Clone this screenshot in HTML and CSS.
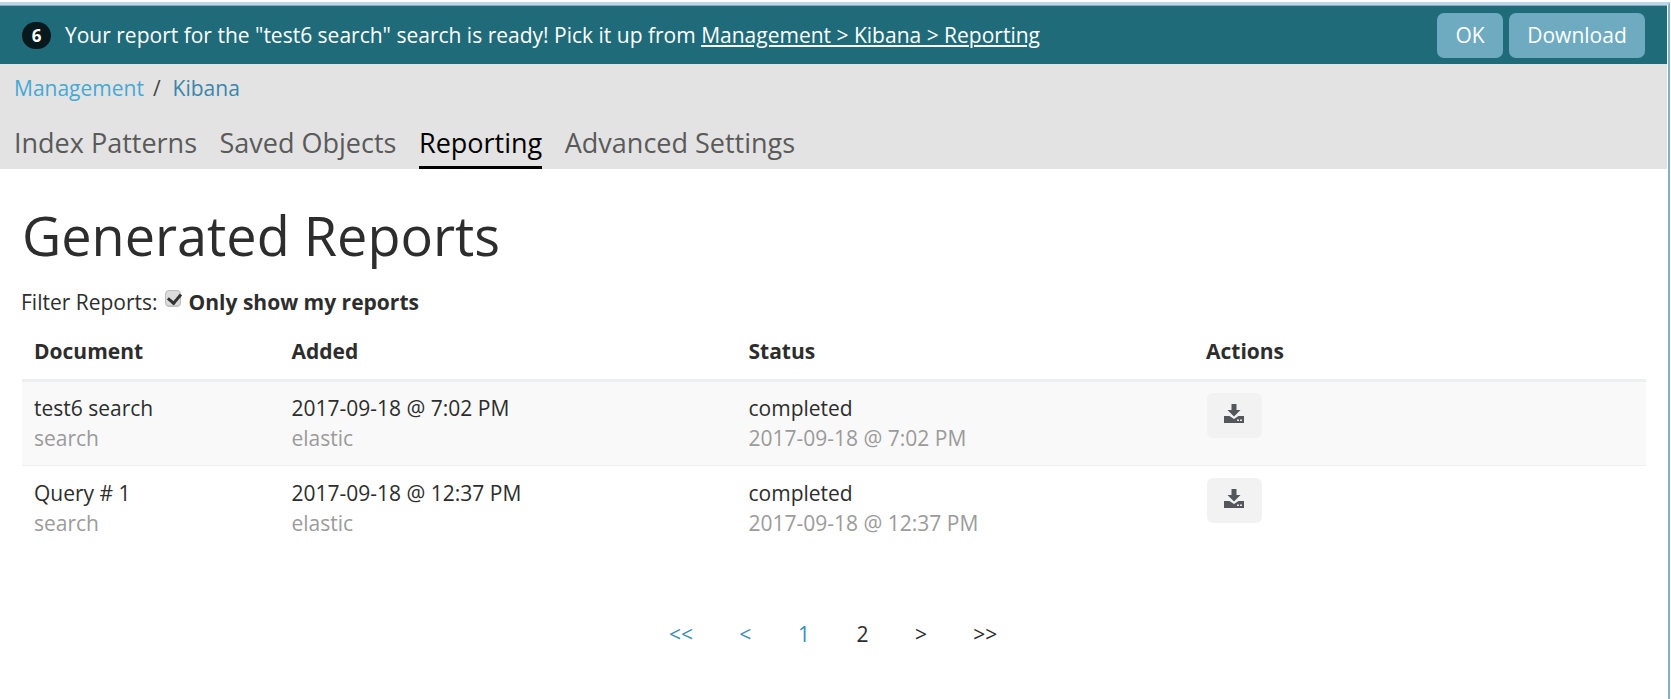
FILE: index.html
```html
<!DOCTYPE html>
<html lang="en">
<head>
<meta charset="utf-8">
<title>Generated Reports</title>
<link rel="stylesheet" href="styles.css">
</head>
<body>
<div class="frame">
  <div class="toast">
    <span class="badge">6</span>
    <span class="toast-msg">Your report for the "test6 search" search is ready! Pick it up from <a class="toast-link" href="#">Management &gt; Kibana &gt; Reporting</a></span>
    <span class="toast-actions">
      <button class="toast-btn btn-ok">OK</button>
      <button class="toast-btn btn-dl">Download</button>
    </span>
  </div>
  <div class="nav">
    <div class="crumbs"><a class="crumb-first" href="#">Management</a><span class="crumb-sep">/</span><a class="crumb-link" href="#">Kibana</a></div>
    <div class="tabs">
      <a class="tab" href="#">Index Patterns</a>
      <a class="tab" href="#">Saved Objects</a>
      <a class="tab active" href="#">Reporting</a>
      <a class="tab" href="#">Advanced Settings</a>
    </div>
  </div>
  <main class="content">
    <h1 class="title">Generated Reports</h1>
    <div class="filter"><span class="filter-text">Filter Reports:</span><input class="check" type="checkbox" checked><b class="filter-label">Only show my reports</b></div>
    <table class="reports">
      <colgroup><col class="c1"><col class="c2"><col class="c3"><col class="c4"></colgroup>
      <thead><tr><th>Document</th><th>Added</th><th>Status</th><th>Actions</th></tr></thead>
      <tbody>
        <tr class="odd">
          <td>test6 search<div class="sub">search</div></td>
          <td>2017-09-18 @ 7:02 PM<div class="sub">elastic</div></td>
          <td>completed<div class="sub">2017-09-18 @ 7:02 PM</div></td>
          <td><button class="dl" aria-label="Download"><svg width="20" height="19" viewBox="0 0 20 19"><path d="M7.500 0h5v6h4L10 12.500 3.500 6h4z" fill="#55565c"/><path d="M0 12h5.500l4.500 3 4.500-3H20v7H0z" fill="#55565c"/><rect x="13" y="15.500" width="2" height="1.500" fill="#e8e8e8"/><rect x="16" y="15.500" width="2" height="1.500" fill="#e8e8e8"/></svg></button></td>
        </tr>
        <tr>
          <td>Query # 1<div class="sub">search</div></td>
          <td>2017-09-18 @ 12:37 PM<div class="sub">elastic</div></td>
          <td>completed<div class="sub">2017-09-18 @ 12:37 PM</div></td>
          <td><button class="dl" aria-label="Download"><svg width="20" height="19" viewBox="0 0 20 19"><path d="M7.500 0h5v6h4L10 12.500 3.500 6h4z" fill="#55565c"/><path d="M0 12h5.500l4.500 3 4.500-3H20v7H0z" fill="#55565c"/><rect x="13" y="15.500" width="2" height="1.500" fill="#e8e8e8"/><rect x="16" y="15.500" width="2" height="1.500" fill="#e8e8e8"/></svg></button></td>
        </tr>
      </tbody>
    </table>
    <div class="pager">
      <a class="pg link w1" href="#">&lt;&lt;</a>
      <a class="pg link w2" href="#">&lt;</a>
      <a class="pg link w2" href="#">1</a>
      <span class="pg w2">2</span>
      <span class="pg w2">&gt;</span>
      <span class="pg w1">&gt;&gt;</span>
    </div>
  </main>
</div>
</body>
</html>
```
FILE: styles.css
```css
* { box-sizing: border-box; }
html, body { margin: 0; height: 100%; background: #fff; overflow: hidden; }
body { font-family: "Open Sans", sans-serif; color: #2d2d2d; padding-top: 2px; }
.frame { width: 1670px; height: 697px; border-top: 3px solid #b9d6ec; border-right: 2px solid #7fb0cc; padding-right: 1px; }
.toast { height: 59px; background: #1f6b7a; border-top: 1px solid #8fa9b3; display: flex; align-items: center; padding: 0 22px; color: #fff; font-size: 21px; }
.badge { width: 29px; height: 27px; border-radius: 14px; background: #08191d; font-size: 17px; font-weight: 700; display: flex; align-items: center; justify-content: center; margin-right: 14px; }
.toast-link { color: #fff; text-decoration: underline; }
.toast-actions { margin-left: auto; display: flex; gap: 6px; }
.toast-btn { height: 45px; border: 0; border-radius: 7px; background: #6eabc1; color: #fff; font: 21px "Open Sans", sans-serif; padding: 0; }
.btn-ok { width: 66px; }
.btn-dl { width: 136px; }
.nav { height: 105px; background: #e3e3e3; padding: 10px 14px 0; }
.crumbs { font-size: 21px; line-height: 28px; display: flex; }
.crumb-first { color: #45a9d3; text-decoration: none; }
.crumb-sep { color: #444; margin: 0 12px 0 9px; }
.crumb-link { color: #3a86ab; text-decoration: none; }
.tabs { display: flex; gap: 22.500px; margin-top: 20px; }
.tab { font-size: 27px; line-height: 41px; height: 47px; color: #5a5a5a; text-decoration: none; }
.tab.active { color: #000; border-bottom: 3px solid #000; }
.content { padding: 0 22px; }
.title { font-size: 54px; font-weight: 400; line-height: 72px; margin: 30px 0 0; color: #2d2d2d; }
.filter { font-size: 21px; line-height: 28px; margin-top: 17px; display: flex; align-items: center; }
.filter-text { margin-left: -1px; }
.check { appearance: none; -webkit-appearance: none; position: relative; margin: -8px 0 0 7px; width: 16px; height: 17px; background: #dcdcdc; border: 1px solid #bdbdbd; border-radius: 4px; box-shadow: inset 0 -1px 0 #c8c8c8; }
.check::after { content: ""; position: absolute; left: 4px; top: 0.500px; width: 6px; height: 10px; border: solid #333; border-width: 0 3px 3px 0; transform: rotate(40deg); }
.filter-label { font-weight: 700; margin-left: 8px; }
.reports { border-collapse: collapse; table-layout: fixed; width: 1624px; margin-top: 7px; font-size: 21px; }
.c1 { width: 257.500px; } .c2 { width: 457px; } .c3 { width: 457.500px; } .c4 { width: 452px; }
.reports th { text-align: left; font-weight: 700; height: 57px; padding: 0 12px; border-bottom: 3px solid #ecf0f1; }
.reports td { height: 85px; padding: 0 12px; border-bottom: 1px solid #ecf0f1; vertical-align: middle; line-height: 30px; }
.reports td:last-child { vertical-align: top; padding-top: 11px; }
.reports tbody tr:last-child td { border-bottom: 0; }
.reports tbody tr:last-child td:last-child { padding-top: 12px; }
.odd { background: #f9f9f9; }
.sub { color: #9b9b9b; }
.dl { width: 55px; height: 45px; margin-left: 0.500px; border: 0; border-radius: 6px; background: #f2f2f2; display: flex; align-items: center; justify-content: center; padding: 0 0 4px; }
.pager { display: flex; margin-top: 70px; padding-left: 624px; font-size: 21px; line-height: 28px; }
.pg { display: block; text-align: center; text-decoration: none; color: #2d2d2d; }
.link { color: #3a8fb5; }
.w1 { width: 70px; }
.w2 { width: 58.600px; }
```
